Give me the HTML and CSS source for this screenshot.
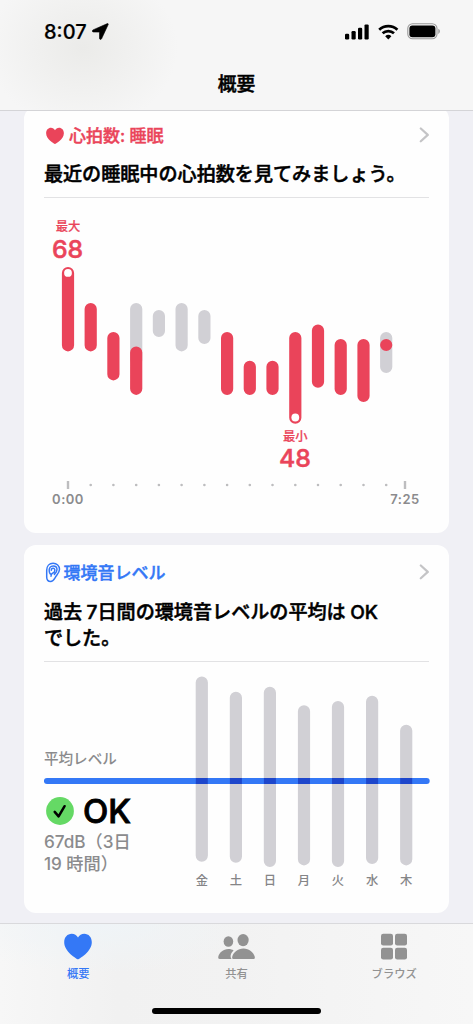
FILE: index.html
```html
<!DOCTYPE html>
<html lang="ja">
<head>
<meta charset="utf-8">
<meta name="viewport" content="width=device-width, initial-scale=1">
<title>概要</title>
<link rel="stylesheet" href="styles.css">
</head>
<body>
<div class="screen">
  <header class="topbar">
    <div class="status">
      <div class="status-left">
        <span class="time">8:07</span>
        <svg class="location" width="17" height="17" viewBox="0 0 17 17"><path d="M15.4.6 1 6.9c-1.1.5-.8 2.1.4 2.1l6.1.1v6.2c0 1.3 1.6 1.6 2.1.4L16.2 1.5c.3-.6-.2-1.1-.8-.9Z" stroke="#000" stroke-width=".6" stroke-linejoin="round"/></svg>
      </div>
      <div class="status-right">
        <svg width="25" height="16" viewBox="0 0 25 16"><rect x="0" y="9.7" width="4.2" height="5.8" rx="1.2"/><rect x="6.5" y="7" width="4.2" height="8.5" rx="1.2"/><rect x="13" y="3.8" width="4.2" height="11.7" rx="1.2"/><rect x="19.5" y="0.4" width="4.2" height="15.1" rx="1.2"/></svg>
        <svg width="21" height="16" viewBox="0 0 21 16" fill="none" stroke="#000" stroke-width="2.7"><path d="M1.2 5.8a13.2 13.2 0 0 1 18.2 0"/><path d="M4.6 9.3a8.4 8.4 0 0 1 11.4 0"/><path d="M10.3 15.4 7.2 12.3a4.5 4.5 0 0 1 6.2 0Z" fill="#000" stroke="none"/></svg>
        <svg width="34" height="17" viewBox="0 0 34 17"><rect x=".8" y=".8" width="29.2" height="15" rx="4.8" fill="none" stroke="#999" stroke-width="1.1"/><rect x="2.4" y="2.4" width="26" height="11.8" rx="3"/><path d="M31.3 5.7v5.2c1-.4 1.6-1.4 1.6-2.6s-.6-2.2-1.6-2.6Z" fill="#999"/></svg>
      </div>
    </div>
    <h1 class="title">概要</h1>
  </header>

  <main class="cards">
    <section class="card card-heart">
      <div class="card-head red">
        <svg class="heart" width="18" height="18" viewBox="0 0 28 26"><path d="M14 25.5C12.6 25.2.2 18 .2 8.7.2 3.7 3.4.2 7.7.2c2.8 0 5 1.5 6.3 3.8C15.3 1.7 17.5.2 20.3.2c4.3 0 7.5 3.5 7.5 8.5 0 9.3-12.4 16.5-13.8 16.8Z"/></svg>
        <span class="card-name">心拍数: 睡眠</span>
        <svg class="chevron" width="10" height="16" viewBox="0 0 10 16"><path d="m1.8 1.5 7 6.4-7 6.4"/></svg>
      </div>
      <p class="headline">最近の睡眠中の心拍数を見てみましょう。</p>
      <svg class="chart" width="386" height="334" viewBox="44 198 386 334">
        <g class="bar-gray">
          <path d="M136.2 309V360M158.9 316v15M181.6 309v36.3M204.4 316v22M386.2 338v29"/>
        </g>
        <g class="bar-red">
          <path d="M68 273v72.3M90.7 309v36.3M113.4 338v36.3M136.2 352.5v36.3M227.1 338v50.9M249.8 366.8v22.1M272.5 366.8v22.1M295.3 338v79.7M318 330.5v51.2M340.7 345v43.9M363.5 345v51M386.2 345v.01"/>
        </g>
        <g fill="#fff"><circle cx="68" cy="272.9" r="3.9"/><circle cx="295.3" cy="417.5" r="3.9"/></g>
        <g class="label-red"><text x="68" y="231.3">最大</text><text class="value" x="67.6" y="258">68</text><text x="295.2" y="440.5">最小</text><text class="value" x="295" y="467">48</text></g>
        <path class="dots" d="M90.7 485h.01M113.4 485h.01M136.2 485h.01M158.9 485h.01M181.6 485h.01M204.4 485h.01M227.1 485h.01M249.8 485h.01M272.5 485h.01M295.3 485h.01M318 485h.01M340.7 485h.01M363.5 485h.01M386.2 485h.01"/>
        <path class="ticks" d="M68 481v8M405 481v8"/>
        <g class="axis"><text x="68" y="503.5">0:00</text><text x="405" y="503.5">7:25</text></g>
      </svg>
    </section>

    <section class="card card-sound">
      <div class="card-head blue">
        <svg class="ear" width="18" height="21" viewBox="0 0 18 21"><path d="M1.7 8.3C1.7 4.1 4.3 1.2 8.1 1.2c3.7 0 6.4 2.6 6.4 6.1 0 2.8-1.4 4.4-3.1 6.5-1.7 2.1-2.7 5.8-5.7 5.8-2.4 0-4-1.8-4-4.5Z"/><path d="M4.2 9.2c-.4-3.1 1.2-5.3 4-5.3 2.2 0 3.8 1.4 3.8 3.5 0 2.2-1.4 3.6-2.6 5M4.3 9.2c0 1.3.3 2 1 2.7M6.3 8.2c0-1.2.8-1.9 1.8-1.9 1.2 0 1.8.9 1.7 2.2-.1 1.7-1 2.2-2.3 2.7-1.5.6-1.5 1.8-1.5 3.1"/></svg>
        <span class="card-name">環境音レベル</span>
        <svg class="chevron" width="10" height="16" viewBox="0 0 10 16"><path d="m1.8 1.5 7 6.4-7 6.4"/></svg>
      </div>
      <p class="headline two">過去<span class="latin-space"></span>7日間の環境音レベルの平均は<span class="latin-space"></span>OK<br>でした。</p>
      <div class="sound-body">
        <svg class="chart" width="386" height="251" viewBox="44 662 386 251">
          <g class="bar-gray"><path d="M201.8 682.6v173M235.9 697.8v158.8M269.9 692.8V861M304 711.4v147.9M338 707.1V861M372.1 701.8v156.1M406.2 730.8v128.5"/></g>
          <rect x="43.9" y="777.9" width="385.8" height="6.1" rx="3" fill="#3478f6"/>
          <path d="M195.8 781h12M229.9 781h12M263.9 781h12M298 781h12M332 781h12M366.1 781h12M400.2 781h12" stroke="#1d46cb" stroke-width="6.1"/>
          <g class="days"><text x="201.8" y="885">金</text><text x="235.9" y="885">土</text><text x="269.9" y="885">日</text><text x="304" y="885">月</text><text x="338" y="885">火</text><text x="372.1" y="885">水</text><text x="406.2" y="885">木</text></g>
        </svg>
        <div class="summary">
          <span class="average">平均レベル</span>
          <div class="ok-row">
            <svg width="28" height="28" viewBox="0 0 28 28"><circle cx="14" cy="14" r="13.9" fill="#65d965"/><path d="m8.7 14.9 3.9 4.5 6-10.2" fill="none" stroke="#000" stroke-width="2.5" stroke-linecap="round" stroke-linejoin="round"/></svg>
            <span class="ok">OK</span>
          </div>
          <p class="detail">67dB（3日<br>19<span class="latin-space"></span>時間）</p>
        </div>
      </div>
    </section>
  </main>

  <footer class="tabbar">
    <nav class="tabs">
      <div class="tab active">
        <svg width="28" height="27" viewBox="0 0 28 26"><path d="M14 25.8C12.6 25.5.2 18 .2 8.7.2 3.7 3.4.2 7.7.2c2.8 0 5 1.5 6.3 3.8C15.3 1.7 17.5.2 20.3.2c4.3 0 7.5 3.5 7.5 8.5 0 9.3-12.4 16.8-13.8 17.1Z"/></svg>
        <span>概要</span>
      </div>
      <div class="tab">
        <svg width="40" height="27" viewBox="0 0 40 27"><ellipse cx="11.4" cy="8.5" rx="4.8" ry="5.3"/><path d="M14.6 26H2.8c-1.3 0-1.8-.8-1.5-2.2.8-4 4.8-7.8 10.1-7.8 2.2 0 3.9.5 5.2 1.5-2.7 2.3-4 6.1-2 8.5Z"/><ellipse cx="26.1" cy="7.1" rx="5.6" ry="6.2"/><path d="M17 26c-1.7 0-2.2-1-1.7-2.6 1.1-4 5.5-7.9 11.2-7.9s10 3.9 11.2 7.9c.5 1.6 0 2.6-1.7 2.6Z"/></svg>
        <span>共有</span>
      </div>
      <div class="tab">
        <svg width="28" height="27" viewBox="0 0 28 27"><rect x="1" y=".7" width="12" height="11.9" rx="2.3"/><rect x="15" y=".7" width="12" height="11.9" rx="2.3"/><rect x="1" y="14.7" width="12" height="11.9" rx="2.3"/><rect x="15" y="14.7" width="12" height="11.9" rx="2.3"/></svg>
        <span>ブラウズ</span>
      </div>
    </nav>
    <div class="home-indicator"></div>
  </footer>
</div>
</body>
</html>
```
FILE: styles.css
```css
* { box-sizing: border-box; }
body {
  margin: 0;
  background: #f0f0f5;
  color: #000;
  font-family: Inter, "Noto Sans CJK JP", sans-serif;
}
svg { display: block; flex: none; }
h1, p { margin: 0; }

.screen {
  width: 473px;
  height: 1024px;
  overflow: hidden;
  display: flex;
  flex-direction: column;
}

.topbar {
  position: relative;
  z-index: 1;
  flex: none;
  height: 111px;
  border-bottom: 1px solid #d4d4d7;
  background: radial-gradient(ellipse 95px 80px at 83px 48px, #ebebe9, rgba(235, 235, 233, 0)), #f6f6f6;
}
.status {
  height: 63px;
  padding: 0 32px 0 44px;
  display: flex;
  align-items: center;
  justify-content: space-between;
}
.status-left { display: flex; align-items: center; gap: 5px; }
.time { font-size: 20px; line-height: 24px; font-weight: 500; letter-spacing: 0; -webkit-text-stroke: 0.2px; }
.status-right { display: flex; align-items: center; gap: 8px; }
.title {
  font-size: 18.8px;
  line-height: 28px;
  font-weight: 500;
  -webkit-text-stroke: 0.5px;
  text-align: center;
  padding-top: 8px;
  height: 42px;
}

.cards {
  flex: none;
  height: 812px;
  margin-top: -4px;
  padding: 0 24.3px;
  display: flex;
  flex-direction: column;
  gap: 12.3px;
}
.card {
  background: #fefefe;
  border-radius: 12px;
  padding: 0 19.6px;
  display: flex;
  flex-direction: column;
  flex: none;
}
.card-heart { height: 425.7px; }
.card-sound { height: 367.6px; }

.card-head {
  height: 32px;
  margin-top: 12px;
  display: flex;
  align-items: center;
}
.card-sound .card-head { margin-top: 11px; }
.card-name {
  flex: 1;
  padding-top: 2px;
  font-size: 17px;
  line-height: 26px;
  font-weight: 500;
  -webkit-text-stroke: 0.4px;
}
.red { color: #ea445a; }
.blue { color: #3478f6; }
.heart { fill: currentColor; margin: 1px 5px 0 2px; }
.ear {
  fill: none;
  stroke: currentColor;
  stroke-width: 1.5;
  stroke-linecap: round;
  margin: 1px 0.8px 0 0.8px;
}
.chevron {
  fill: none;
  stroke: #c4c4c6;
  stroke-width: 2.2;
  stroke-linecap: round;
  stroke-linejoin: round;
}
.headline {
  height: 47px;
  padding-top: 10px;
  border-bottom: 1px solid #e2e2e4;
  font-size: 19.1px;
  line-height: 26.6px;
  font-weight: 500;
  -webkit-text-stroke: 0.5px;
  white-space: nowrap;
}
.headline.two { height: 74px; padding-top: 11px; }
.latin-space { display: inline-block; width: 4.5px; }

.chart { font-family: Inter, "Noto Sans CJK JP", sans-serif; text-anchor: middle; }
.bar-gray path, .bar-red path { fill: none; stroke-width: 12.2; stroke-linecap: round; }
.bar-gray path { stroke: #d1d0d5; }
.bar-red path { stroke: #ea445a; }
.label-red { fill: #ea445a; stroke: #ea445a; stroke-width: 0.2; font-size: 12.3px; font-weight: 500; }
.label-red .value { font-size: 24.8px; stroke-width: 0.5; }
.dots { stroke: #bdbdbf; stroke-width: 2.6; stroke-linecap: round; }
.ticks { stroke: #bdbdbf; stroke-width: 2.4; }
.axis { fill: #8b8b8d; font-size: 13px; font-weight: 600; letter-spacing: 0.5px; }
.days { fill: #858587; font-size: 12.3px; font-weight: 500; }

.sound-body { display: grid; }
.sound-body > * { grid-area: 1 / 1; }
.summary {
  width: 130px;
  padding-top: 86px;
  display: flex;
  flex-direction: column;
}
.average { font-size: 14.6px; line-height: 22px; font-weight: 500; color: #8b8b8d; }
.ok-row {
  height: 36px;
  margin-top: 23px;
  padding-left: 2px;
  display: flex;
  align-items: center;
  gap: 9px;
}
.ok {
  font-size: 33px;
  line-height: 36px;
  font-weight: 500;
  letter-spacing: 0;
  -webkit-text-stroke: 0.9px;
  stroke-linejoin: round;
}
.detail {
  margin-top: 2px;
  font-size: 17.2px;
  line-height: 22px;
  font-weight: 500;
  color: #8b8b8d;
  white-space: nowrap;
}

.tabbar {
  flex: none;
  height: 105px;
  margin-top: 4px;
  border-top: 1px solid #d9d9dc;
  background: radial-gradient(ellipse 150px 50px at 100px 0, #eff4f7, rgba(239, 244, 247, 0)), linear-gradient(90deg, #f7f7f7, #f1f1f1 25%, #f2f2f2 50%, #f7f7f7);
}
.tabs {
  height: 84px;
  display: grid;
  grid-template-columns: repeat(3, 157.7px);
}
.tab {
  padding-top: 9px;
  display: flex;
  flex-direction: column;
  align-items: center;
  gap: 6px;
  fill: #929292;
  color: #929292;
  font-size: 11.3px;
  line-height: 16px;
  font-weight: 500;
}
.tab.active { fill: #3478f6; color: #3478f6; }
.tab.active svg, .tab.active span { margin-left: -1px; }
.home-indicator { width: 169px; height: 6px; margin: 0 auto; border-radius: 3px; background: #000; }
```
